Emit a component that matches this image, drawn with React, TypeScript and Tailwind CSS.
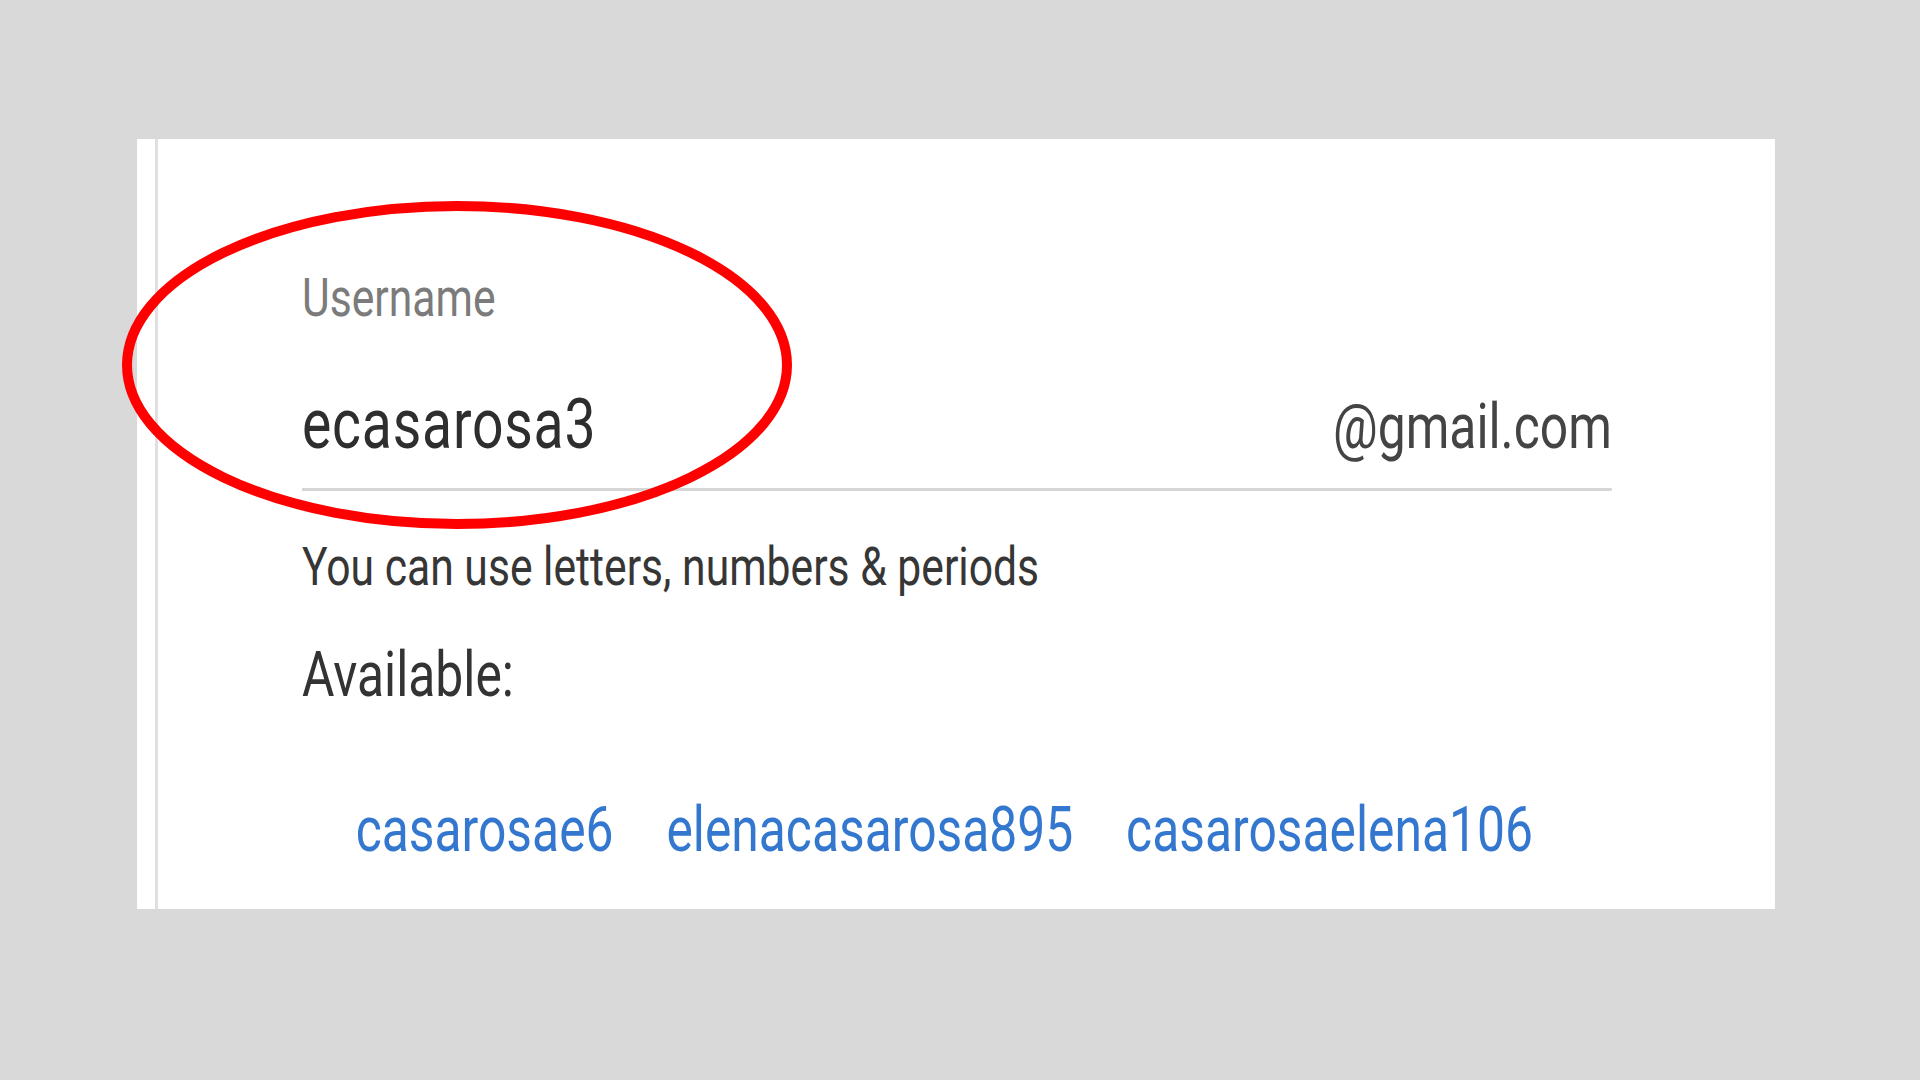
import React from "react";

const suggestions = ["casarosae6", "elenacasarosa895", "casarosaelena106"];

export default function App() {
  return (
    <div
      className="relative w-[1920px] h-[1080px] overflow-hidden bg-[#d9d9d9] pt-[139px] pl-[137px]"
      style={{ fontFamily: "Roboto, 'Noto Sans', sans-serif" }}
    >
      {/* card */}
      <div className="w-[1638px] h-[770px] bg-white flex">
        <div className="ml-[18px] w-[3px] shrink-0 bg-[#e0e0e0]" />

        {/* the screenshot text is condensed, so the column is squeezed horizontally */}
        <div className="ml-[143.5px] w-[1658px] shrink-0 origin-left scale-x-[0.79] pt-[132px] flex flex-col">
          <div className="text-[54px] leading-none text-[#7b7b7b]">Username</div>

          <div className="mt-[64px] flex items-baseline justify-between">
            <span className="text-[70px] leading-none tracking-[1px] text-[#2e2e2e]">ecasarosa3</span>
            <span className="text-[63px] leading-none text-[#444444]">@gmail.com</span>
          </div>

          <div className="mt-[29px] h-[3px] bg-[#d6d6d6]" />

          <div className="mt-[48.5px] text-[54px] leading-none text-[#363636]">
            You can use letters, numbers &amp; periods
          </div>

          <div className="mt-[49px] text-[63px] leading-none text-[#333333]">Available:</div>

          <div className="mt-[92.5px] pl-[68px] flex gap-[67px] text-[63px] leading-none text-[#3477cf]">
            {suggestions.map((s) => (
              <span key={s}>{s}</span>
            ))}
          </div>
        </div>
      </div>

      {/* red annotation circle */}
      <svg className="absolute inset-0 pointer-events-none" width="1920" height="1080" viewBox="0 0 1920 1080">
        <ellipse cx="457" cy="365" rx="330" ry="159" fill="none" stroke="#ff0000" strokeWidth="10" />
      </svg>
    </div>
  );
}
